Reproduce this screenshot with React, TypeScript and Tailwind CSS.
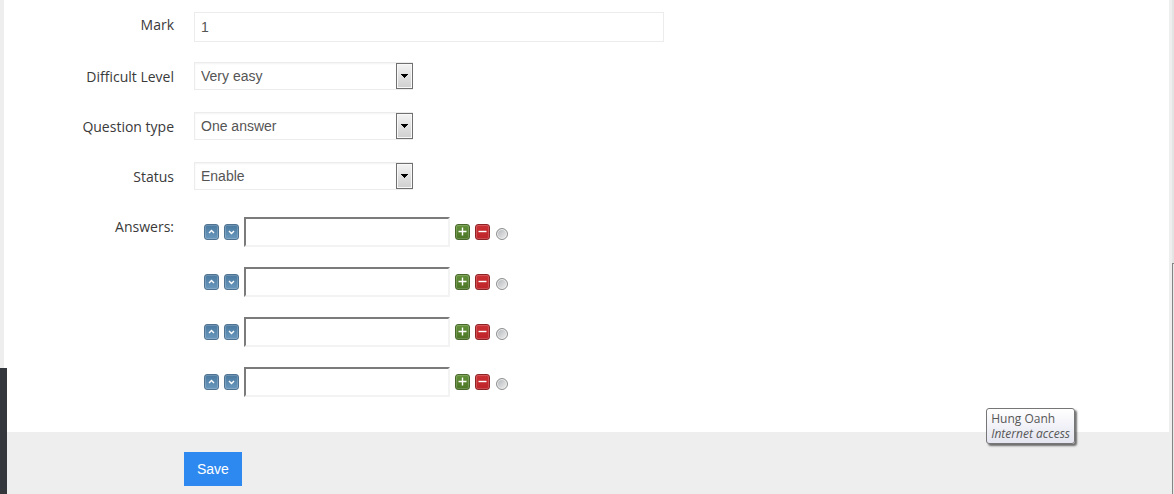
import type { ReactNode } from "react";

type Option = { id: string; label: string; options: string[] };

const selects: Option[] = [
  { id: "level", label: "Difficult Level", options: ["Very easy", "Easy", "Medium", "Hard"] },
  { id: "type", label: "Question type", options: ["One answer", "Multiple answers"] },
  { id: "status", label: "Status", options: ["Enable", "Disable"] },
];

const tones = {
  blue: "border-[#4f7391] bg-linear-to-b from-[#4a79a0] to-[#6a98bd]",
  green: "border-[#48682c] bg-linear-to-b from-[#64923a] to-[#4a7526]",
  red: "border-[#8f2426] bg-linear-to-b from-[#cb3034] to-[#bd2328]",
};

function IconButton({ tone, label, d }: { tone: keyof typeof tones; label: string; d: string }) {
  return (
    <button
      type="button"
      aria-label={label}
      className={`flex h-4 w-[15px] shrink-0 items-center justify-center rounded-[3px] border ${tones[tone]}`}
    >
      <svg viewBox="0 0 13 14" className="h-[14px] w-[13px] shrink-0" fill="none">
        <rect x="0.5" y="0.5" width="12" height="13" rx="1.5" stroke="#fff" strokeOpacity="0.18" />
        <path d={d} stroke="#fff" strokeWidth="1.4" />
      </svg>
    </button>
  );
}

function SelectBox({ id, options }: { id: string; options: string[] }) {
  return (
    <div className="relative h-7 w-[219px]">
      <select
        id={id}
        className="h-7 w-full appearance-none border border-[#ececec] bg-white pr-5 pl-1.5 text-sm leading-5 text-[#555] shadow-[inset_0_1px_2px_#f3f3f3] outline-none"
      >
        {options.map((option) => (
          <option key={option}>{option}</option>
        ))}
      </select>
      <span className="pointer-events-none absolute inset-y-px right-0 flex w-[17px] items-center justify-center border border-[#707070] bg-linear-to-b from-[#f3f3f3] to-[#cfcfcf] shadow-[inset_0_0_0_1px_#f8f8f8]">
        <svg viewBox="0 0 7 4" className="h-1 w-[7px]" shapeRendering="crispEdges">
          <path d="M0 0H7V1H6V2H5V3H4V4H3V3H2V2H1V1H0Z" fill="#000" />
        </svg>
      </span>
    </div>
  );
}

function Row({ label, htmlFor, children }: { label: string; htmlFor: string; children: ReactNode }) {
  return (
    <div className="flex gap-5">
      <label htmlFor={htmlFor} className="mt-[5px] w-[170px] shrink-0 text-right font-['Open_Sans',sans-serif] text-sm leading-5 text-[#3a3a3a]">
        {label}
      </label>
      {children}
    </div>
  );
}

function Answer({ index }: { index: number }) {
  return (
    <div className="flex h-[30px] items-center gap-[5px]">
      <IconButton tone="blue" label={`Move answer ${index} up`} d="M4 8L6.5 5.5L9 8" />
      <IconButton tone="blue" label={`Move answer ${index} down`} d="M4 6L6.5 8.5L9 6" />
      <input
        id={`answer-${index}`}
        type="text"
        aria-label={`Answer ${index}`}
        className="h-[30px] w-[206px] border-2 border-t-[#7b7b7b] border-r-[#f3f3f3] border-b-[#f3f3f3] border-l-[#7b7b7b] bg-white px-1.5 text-sm text-[#555] outline-none"
      />
      <IconButton tone="green" label={`Add answer after ${index}`} d="M2.5 6.5H10.5M6.5 2.5V10.5" />
      <IconButton tone="red" label={`Remove answer ${index}`} d="M2.5 6.5H10.5" />
      <input
        type="radio"
        name="correct"
        aria-label={`Answer ${index} is correct`}
        className="mt-1 ml-px h-3 w-3 shrink-0 appearance-none rounded-full border border-[#8e8f8f] bg-linear-to-br from-[#b0b4b8] to-[#f2f2f2] shadow-[inset_0_0_0_1px_#eeeeee] checked:from-[#225577]"
      />
    </div>
  );
}

export default function App() {
  return (
    <div className="relative flex min-h-screen bg-[#eee] pr-[5px] pl-1 font-['Liberation_Sans',Arial,sans-serif]">
      <form className="flex min-w-0 flex-1 flex-col">
        <div className="bg-white pt-2.5 pb-[35px]">
          <div className="mb-5">
            <Row label="Mark" htmlFor="mark">
              <input
                id="mark"
                type="text"
                defaultValue="1"
                className="mt-0.5 h-[30px] w-[470px] border border-[#ececec] bg-white px-1.5 text-sm leading-5 text-[#555] outline-none"
              />
            </Row>
          </div>
          <div className="flex flex-col gap-[22px]">
            {selects.map(({ id, label, options }) => (
              <Row key={id} label={label} htmlFor={id}>
                <SelectBox id={id} options={options} />
              </Row>
            ))}
            <Row label="Answers:" htmlFor="answer-1">
              <div className="mt-[5px] ml-2.5 flex flex-col gap-5">
                {[1, 2, 3, 4].map((index) => (
                  <Answer key={index} index={index} />
                ))}
              </div>
            </Row>
          </div>
        </div>
        <div className="flex-1 bg-[#eee] pt-5 pb-2 pl-[180px]">
          <button type="submit" className="h-[34px] bg-[#2d89ef] px-[13px] text-sm leading-5 text-white">
            Save
          </button>
        </div>
      </form>

      <div className="absolute bottom-0 left-0 h-[126px] w-[7px] bg-[#34373c]" />
      <div className="absolute top-0 right-0 h-[263px] w-0.5 bg-[#e4e4e4]" />
      <div className="absolute right-0 bottom-0 h-[231px] w-0.5 border-t border-l border-[#858585] bg-[#e8e8e8]" />
      <div
        role="tooltip"
        className="absolute right-[99px] bottom-[50px] rounded-[3px] border border-[#767676] bg-linear-to-b from-white to-[#e4e5f0] px-1 pt-0.5 pb-0.5 font-['Open_Sans',sans-serif] text-xs leading-[15px] text-[#575757] shadow-[2px_2px_2px_#0000008c]"
      >
        <p>Hung Oanh</p>
        <p className="italic">Internet access</p>
      </div>
    </div>
  );
}
